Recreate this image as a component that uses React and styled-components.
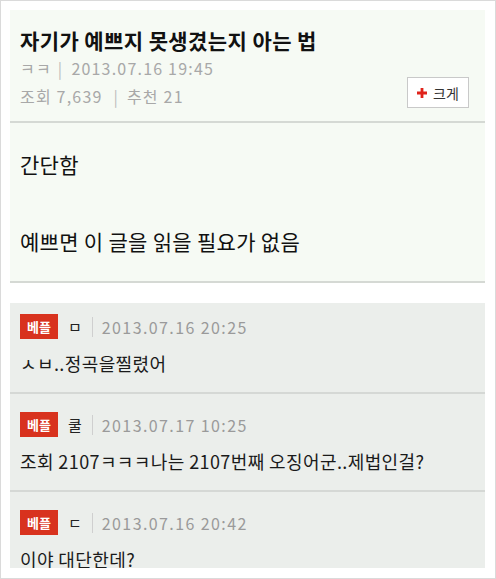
import styled, { createGlobalStyle } from "styled-components";

const GlobalStyle = createGlobalStyle`
  html, body {
    margin: 0;
    padding: 0;
    background: #fff;
  }
  body {
    font-family: "Noto Sans CJK KR", "Noto Sans", sans-serif;
  }
`;

const comments = [
  { nick: "ㅁ", date: "2013.07.16 20:25", text: "ㅅㅂ..정곡을찔렸어" },
  { nick: "쿨", date: "2013.07.17 10:25", text: "조회 2107ㅋㅋㅋ나는 2107번째 오징어군..제법인걸?" },
  { nick: "ㄷ", date: "2013.07.16 20:42", text: "이야 대단한데?" },
];

const App = () => {
  return (
    <>
      <GlobalStyle />
      <Frame>
        <Post>
          <Header>
            <Title>자기가 예쁘지 못생겼는지 아는 법</Title>
            <MetaArea>
              <div>
                <MetaLine>
                  ㅋㅋ<Bar>|</Bar>2013.07.16 19:45
                </MetaLine>
                <MetaLine>
                  조회 7,639 <Bar>|</Bar>추천 21
                </MetaLine>
              </div>
              <ZoomButton>
                <PlusIcon viewBox="0 0 10 10">
                  <path d="M3.6 0h2.8v3.6H10v2.8H6.4V10H3.6V6.4H0V3.6h3.6z" fill="#e0231b" />
                </PlusIcon>
                크게
              </ZoomButton>
            </MetaArea>
          </Header>
          <Body>
            <Para>간단함</Para>
            <Para>예쁘면 이 글을 읽을 필요가 없음</Para>
          </Body>
        </Post>

        <CommentList>
          {comments.map((c, i) => (
            <Comment key={i} $first={i === 0}>
              <CommentHead>
                <Badge>베플</Badge>
                <Nick>{c.nick}</Nick>
                <Divider />
                <CDate>{c.date}</CDate>
              </CommentHead>
              <CommentText>{c.text}</CommentText>
            </Comment>
          ))}
        </CommentList>
      </Frame>
    </>
  );
};

const Frame = styled.div`
  box-sizing: border-box;
  width: 496px;
  height: 579px;
  border: 1px solid #dadada;
  padding: 9px 10px 10px 9px;
  display: flex;
  flex-direction: column;
  overflow: hidden;
`;

const Post = styled.section`
  background: #f6faf4;
  border-bottom: 2px solid #d5d9d4;
`;

const Header = styled.div`
  padding: 16px 10px 11px 10px;
  border-bottom: 2px solid #d5d9d4;
`;

const Title = styled.h1`
  margin: 0;
  font-size: 21px;
  line-height: 28px;
  font-weight: 700;
  color: #111;
  letter-spacing: 0.4px;
`;

const MetaArea = styled.div`
  display: flex;
  justify-content: space-between;
  align-items: flex-end;
`;

const MetaLine = styled.div`
  font-size: 16px;
  line-height: 28px;
  color: #a8a8a8;
  letter-spacing: 1.2px;
`;

const Bar = styled.span`
  color: #bdbdbd;
  margin: 0 8px 0 6px;
`;

const ZoomButton = styled.button`
  box-sizing: border-box;
  width: 62px;
  height: 31px;
  margin: 0 6px 2px 0;
  border: 1px solid #c9c9c9;
  background: #fff;
  display: flex;
  align-items: center;
  justify-content: center;
  gap: 6px;
  font-family: inherit;
  font-size: 14px;
  color: #333;
  padding: 0;
`;

const PlusIcon = styled.svg`
  width: 10px;
  height: 10px;
`;

const Body = styled.div`
  padding: 27px 10px 26px 10px;
  display: flex;
  flex-direction: column;
  gap: 49px;
`;

const Para = styled.p`
  margin: 0;
  font-size: 21px;
  line-height: 28px;
  color: #111;
  letter-spacing: 0.3px;
`;

const CommentList = styled.section`
  margin-top: 20px;
  flex: 1;
  background: #ebeeeb;
  overflow: hidden;
`;

const Comment = styled.div`
  padding: ${({ $first }) => ($first ? "11px" : "18px")} 10px 18px 10px;
  border-bottom: 2px solid #d5d8d5;
`;

const CommentHead = styled.div`
  display: flex;
  align-items: center;
  height: 25px;
`;

const Badge = styled.span`
  width: 38px;
  height: 25px;
  background: #d8321e;
  color: #fff;
  font-size: 13px;
  font-weight: 700;
  display: flex;
  align-items: center;
  justify-content: center;
`;

const Nick = styled.span`
  margin-left: 10px;
  font-size: 15px;
  color: #222;
`;

const Divider = styled.span`
  width: 1px;
  height: 20px;
  background: #cfcfcf;
  margin: 0 9px 0 10px;
`;

const CDate = styled.span`
  font-size: 16px;
  color: #9a9a9a;
  letter-spacing: 1.4px;
`;

const CommentText = styled.div`
  margin-top: 13px;
  font-size: 18px;
  line-height: 22px;
  color: #1a1a1a;
  letter-spacing: 0.4px;
`;

export default App;
